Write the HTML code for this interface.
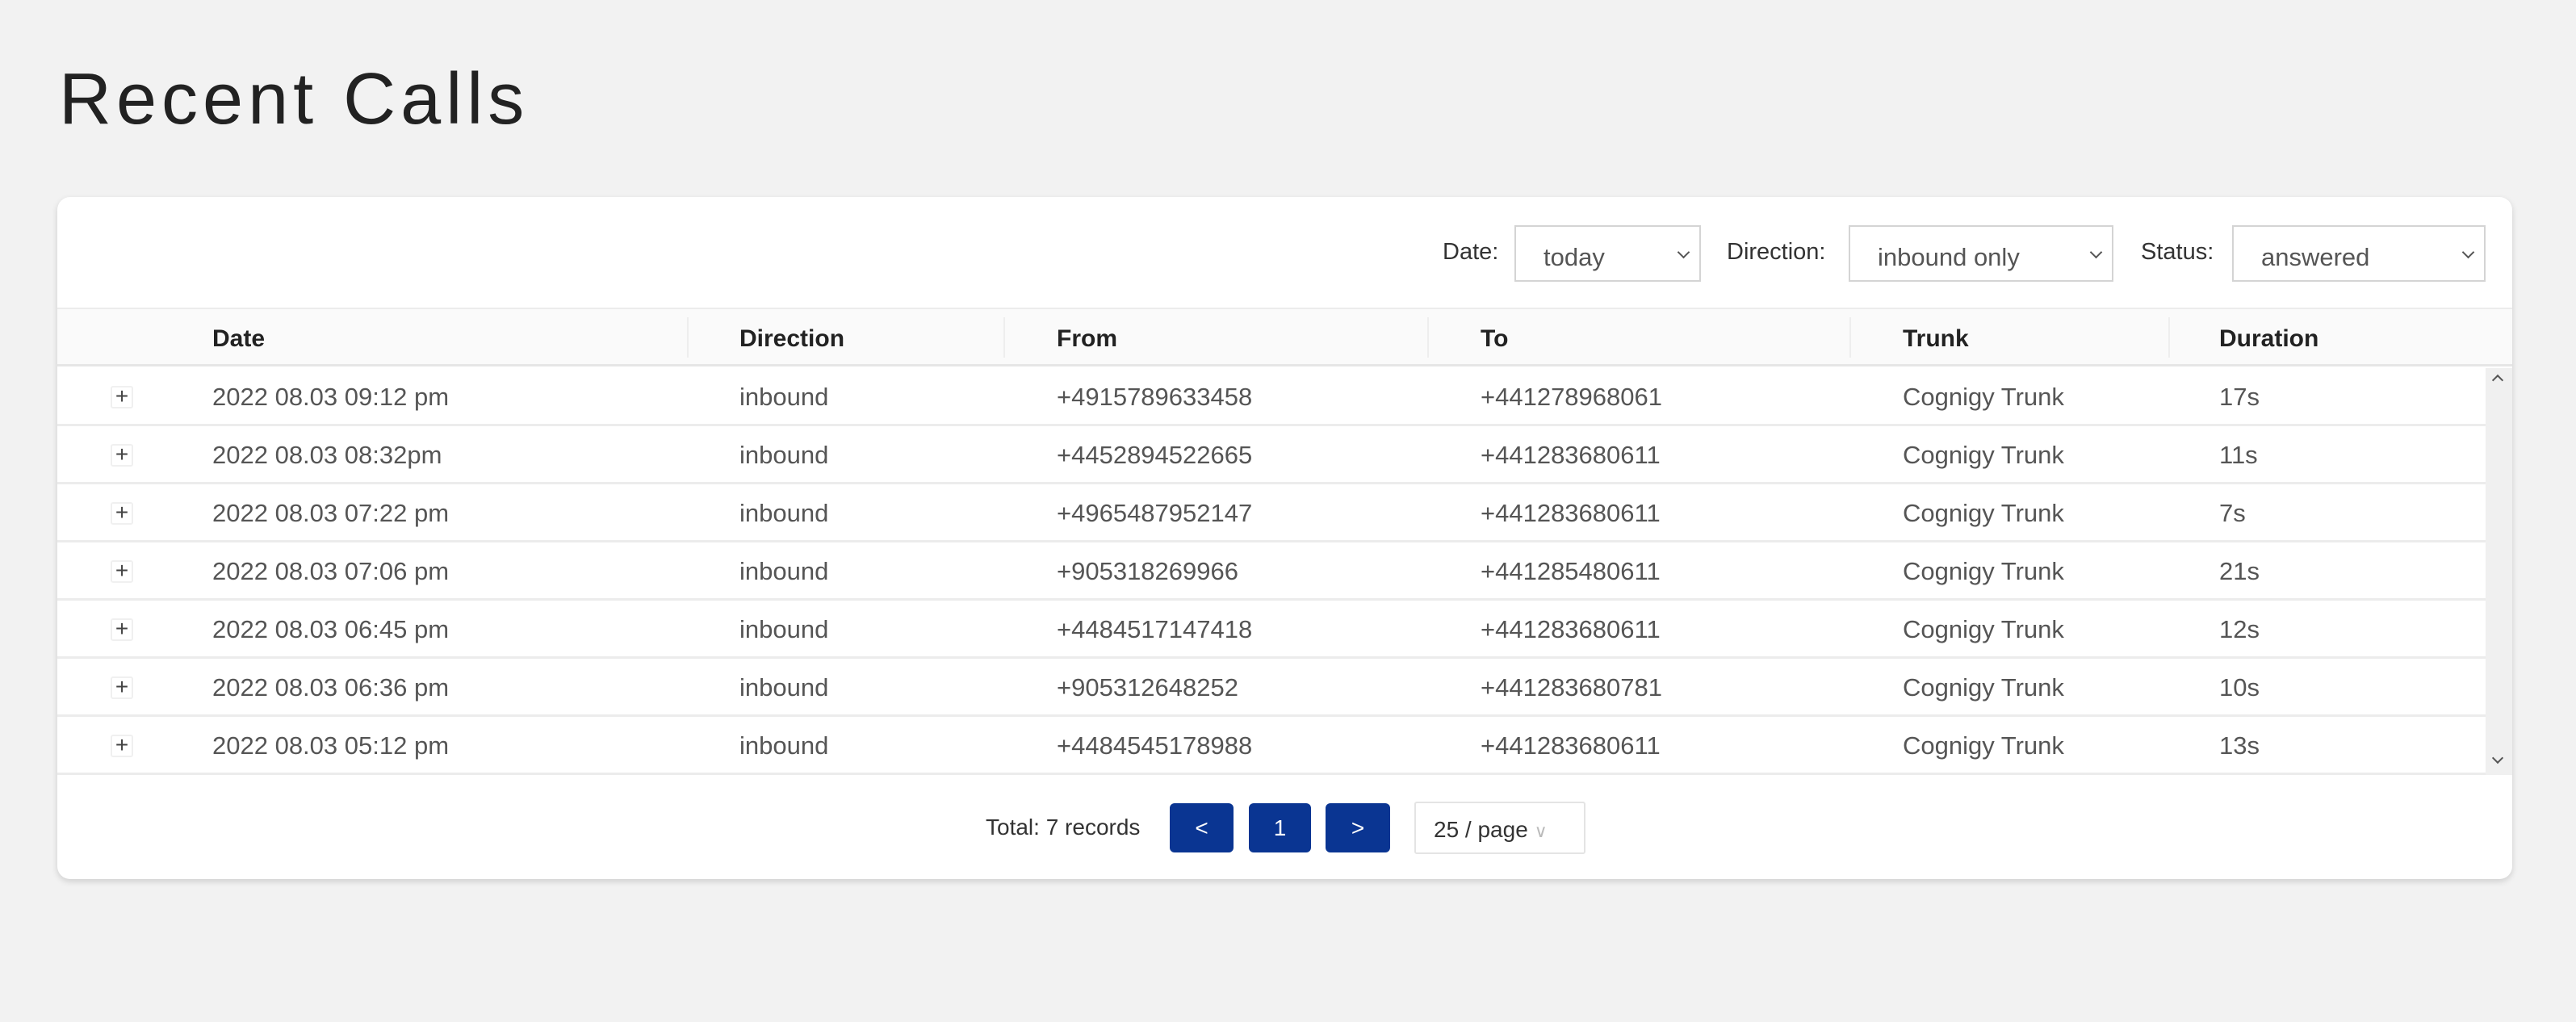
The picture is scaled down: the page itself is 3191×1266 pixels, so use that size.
<!DOCTYPE html>
<html><head><meta charset="utf-8"><style>
*{box-sizing:border-box;margin:0;padding:0}
body{width:3191px;height:1266px;background:#f2f2f2;font-family:"Liberation Sans",sans-serif;position:relative;overflow:hidden}
.abs{position:absolute}
h1{position:absolute;left:73px;top:72px;font-size:90px;font-weight:400;color:#222;letter-spacing:6px}
.card{position:absolute;left:71px;top:244px;width:3041px;height:845px;background:#fff;border-radius:16px;box-shadow:0 3px 8px rgba(0,0,0,.15);overflow:hidden}
.lbl{position:absolute;top:52px;font-size:29px;color:#333}
.sel{position:absolute;top:35px;height:70px;border:2px solid #d4d4d4;font-size:31px;color:#555;padding:20px 0 0 34px}
.sel:after{content:"";position:absolute;right:14px;top:26px;width:9px;height:9px;border-right:2px solid #555;border-bottom:2px solid #555;transform:rotate(45deg)}
.head{position:absolute;left:0;top:137px;width:3041px;height:73px;background:#fafafa;border-top:2px solid #ececec;border-bottom:3px solid #e6e6e6}
.th{position:absolute;top:20px;font-size:30px;font-weight:700;color:#222}
.sep{position:absolute;top:10px;width:2px;height:50px;background:#eee}
.row{position:absolute;left:0;width:3008px;height:72px;border-bottom:3px solid #ececec}
.td{position:absolute;top:18px;font-size:31px;color:#555}
.plus{position:absolute;left:66px;top:22px;width:28px;height:28px;border:2px solid #f0f0f0;border-radius:3px;font-size:28px;line-height:22px;text-align:center;color:#444}
.sb{position:absolute;left:3008px;top:212px;width:33px;height:504px;background:#f0f0f0}
.btn{position:absolute;top:751px;height:61px;background:#0a3592;border-radius:6px;color:#fff;font-size:28px;text-align:center;line-height:61px}
</style></head><body>
<h1>Recent Calls</h1>
<div class="card">
<div class="lbl" style="left:1716px">Date:</div>
<div class="sel" style="left:1805px;width:231px">today</div>
<div class="lbl" style="left:2068px">Direction:</div>
<div class="sel" style="left:2219px;width:328px">inbound only</div>
<div class="lbl" style="left:2581px">Status:</div>
<div class="sel" style="left:2694px;width:314px">answered</div>
<div class="head">
<div class="th" style="left:192px">Date</div><div class="sep" style="left:780px"></div>
<div class="th" style="left:845px">Direction</div><div class="sep" style="left:1172px"></div>
<div class="th" style="left:1238px">From</div><div class="sep" style="left:1697px"></div>
<div class="th" style="left:1763px">To</div><div class="sep" style="left:2220px"></div>
<div class="th" style="left:2286px">Trunk</div><div class="sep" style="left:2615px"></div>
<div class="th" style="left:2678px">Duration</div>
</div>
<div class="sb"><div class="abs" style="left:10px;top:10px;width:10px;height:10px;border-left:2px solid #555;border-top:2px solid #555;transform:rotate(45deg)"></div><div class="abs" style="left:10px;top:478px;width:10px;height:10px;border-right:2px solid #555;border-bottom:2px solid #555;transform:rotate(45deg)"></div></div>
<div class="row" style="top:212px"><div class="plus">+</div><div class="td" style="left:192px">2022 08.03 09:12 pm</div><div class="td" style="left:845px">inbound</div><div class="td" style="left:1238px">+4915789633458</div><div class="td" style="left:1763px">+441278968061</div><div class="td" style="left:2286px">Cognigy Trunk</div><div class="td" style="left:2678px">17s</div></div>
<div class="row" style="top:284px"><div class="plus">+</div><div class="td" style="left:192px">2022 08.03 08:32pm</div><div class="td" style="left:845px">inbound</div><div class="td" style="left:1238px">+4452894522665</div><div class="td" style="left:1763px">+441283680611</div><div class="td" style="left:2286px">Cognigy Trunk</div><div class="td" style="left:2678px">11s</div></div>
<div class="row" style="top:356px"><div class="plus">+</div><div class="td" style="left:192px">2022 08.03 07:22 pm</div><div class="td" style="left:845px">inbound</div><div class="td" style="left:1238px">+4965487952147</div><div class="td" style="left:1763px">+441283680611</div><div class="td" style="left:2286px">Cognigy Trunk</div><div class="td" style="left:2678px">7s</div></div>
<div class="row" style="top:428px"><div class="plus">+</div><div class="td" style="left:192px">2022 08.03 07:06 pm</div><div class="td" style="left:845px">inbound</div><div class="td" style="left:1238px">+905318269966</div><div class="td" style="left:1763px">+441285480611</div><div class="td" style="left:2286px">Cognigy Trunk</div><div class="td" style="left:2678px">21s</div></div>
<div class="row" style="top:500px"><div class="plus">+</div><div class="td" style="left:192px">2022 08.03 06:45 pm</div><div class="td" style="left:845px">inbound</div><div class="td" style="left:1238px">+4484517147418</div><div class="td" style="left:1763px">+441283680611</div><div class="td" style="left:2286px">Cognigy Trunk</div><div class="td" style="left:2678px">12s</div></div>
<div class="row" style="top:572px"><div class="plus">+</div><div class="td" style="left:192px">2022 08.03 06:36 pm</div><div class="td" style="left:845px">inbound</div><div class="td" style="left:1238px">+905312648252</div><div class="td" style="left:1763px">+441283680781</div><div class="td" style="left:2286px">Cognigy Trunk</div><div class="td" style="left:2678px">10s</div></div>
<div class="row" style="top:644px"><div class="plus">+</div><div class="td" style="left:192px">2022 08.03 05:12 pm</div><div class="td" style="left:845px">inbound</div><div class="td" style="left:1238px">+4484545178988</div><div class="td" style="left:1763px">+441283680611</div><div class="td" style="left:2286px">Cognigy Trunk</div><div class="td" style="left:2678px">13s</div></div>
<div class="abs" style="left:1150px;top:765px;font-size:28px;color:#333">Total: 7 records</div>
<div class="btn" style="left:1378px;width:79px">&lt;</div>
<div class="btn" style="left:1476px;width:77px">1</div>
<div class="btn" style="left:1571px;width:80px">&gt;</div>
<div class="abs" style="left:1681px;top:749px;width:212px;height:65px;border:2px solid #e4e4e4;border-radius:3px;font-size:28px;color:#333;padding:17px 0 0 22px">25 / page <span style="color:#bbb;font-size:22px">∨</span></div>
</div>
</body></html>
